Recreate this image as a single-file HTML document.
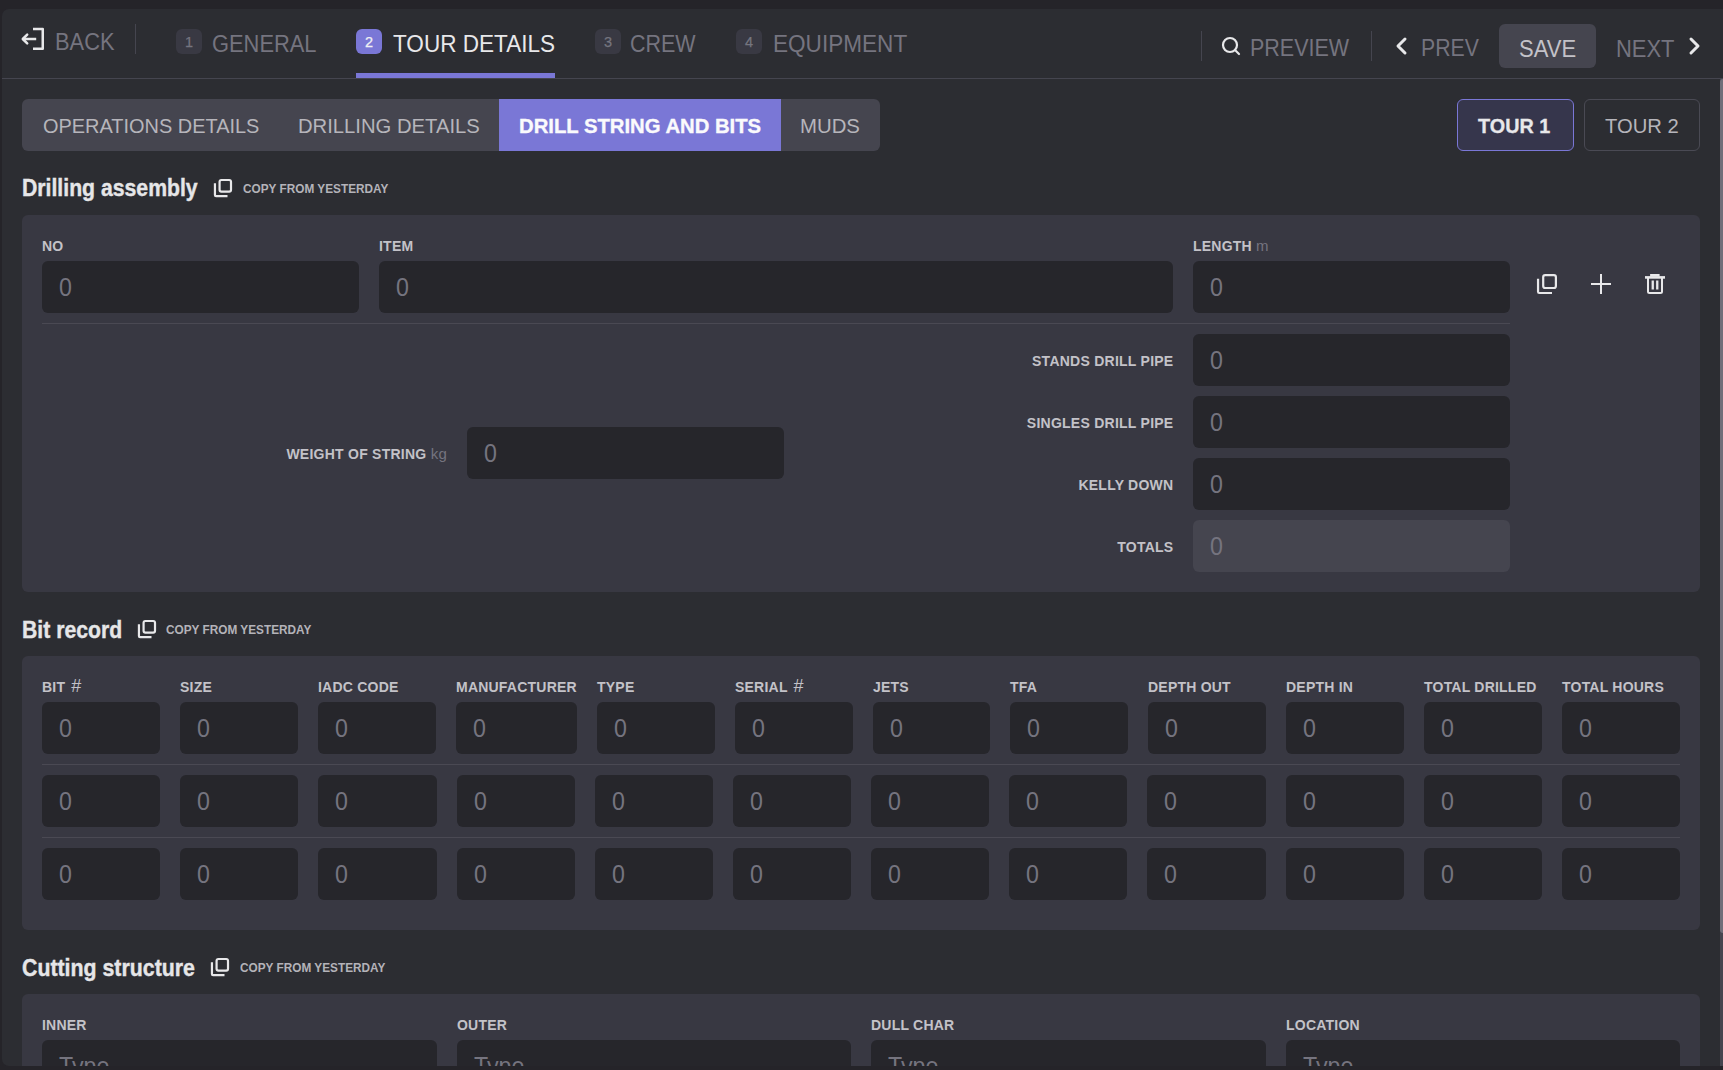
<!DOCTYPE html>
<html><head><meta charset="utf-8">
<style>
*{box-sizing:border-box;margin:0;padding:0}
html,body{width:1723px;height:1070px;overflow:hidden;background:#252429;font-family:"Liberation Sans",sans-serif}
.a{position:absolute}
.t{position:absolute;white-space:nowrap;line-height:1}
.badge{position:absolute;width:26px;height:25px;border-radius:6px;background:#393943;color:#75757f;font-size:14.5px;line-height:27px;text-align:center;-webkit-text-stroke:0.25px currentColor}
.sep{position:absolute;width:1px;background:#45454f}
</style></head><body>
<div class="a" style="left:2px;top:9px;width:1740px;height:1057px;background:#2c2d32;border-radius:7px"></div>
<div class="a" style="left:2px;top:78px;width:1721px;height:1px;background:#45454f;border-radius:0px;"></div>
<svg class="a" style="left:0;top:0;overflow:visible" width="60" height="60" fill="none" stroke="#e8e8ea" stroke-width="2.5" stroke-linejoin="round">
<path d="M33 29.05 H42.75 V48.75 H33"/><path d="M22.8 39 H36.2"/><path d="M27.2 34.6 L22.8 39 L27.2 43.4" stroke-linecap="round"/></svg>
<div class="t" id="back" style="left:54.80px;top:30.72px;font-size:23.00px;transform:scaleX(0.9502);transform-origin:0 0;color:#75747f;font-weight:normal;">BACK</div>
<div class="sep" style="left:135px;top:24px;height:30px"></div>
<div class="badge" style="left:176px;top:29px">1</div>
<div class="t" id="general" style="left:211.80px;top:33.22px;font-size:23.00px;transform:scaleX(0.9507);transform-origin:0 0;color:#75747f;font-weight:normal;">GENERAL</div>
<div class="badge" style="left:356px;top:29px;background:#7a77d6;color:#f0f0f4">2</div>
<div class="t" id="tourdetails" style="left:392.60px;top:32.62px;font-size:23.00px;transform:scaleX(0.9808);transform-origin:0 0;color:#e8e8ea;font-weight:normal;">TOUR DETAILS</div>
<div class="a" style="left:356px;top:73px;width:199px;height:5px;background:#7a77d6;border-radius:0px;"></div>
<div class="badge" style="left:595px;top:29px">3</div>
<div class="t" id="crew" style="left:630.20px;top:32.62px;font-size:23.00px;transform:scaleX(0.9337);transform-origin:0 0;color:#75747f;font-weight:normal;">CREW</div>
<div class="badge" style="left:736px;top:29px">4</div>
<div class="t" id="equipment" style="left:772.60px;top:32.62px;font-size:23.00px;transform:scaleX(0.9814);transform-origin:0 0;color:#75747f;font-weight:normal;">EQUIPMENT</div>
<div class="sep" style="left:1201px;top:31px;height:30px"></div>
<svg class="a" style="left:1220px;top:36px" width="22" height="20" viewBox="0 0 22 20" fill="none" stroke="#e8e8ea" stroke-width="2.2" stroke-linecap="round">
<circle cx="10" cy="9" r="7"/><path d="M15 14 L19 18"/></svg>
<div class="t" id="preview" style="left:1250.40px;top:37.22px;font-size:23.00px;transform:scaleX(0.9342);transform-origin:0 0;color:#75747f;font-weight:normal;">PREVIEW</div>
<div class="sep" style="left:1371px;top:31px;height:30px"></div>
<svg class="a" style="left:1392px;top:36px" width="18" height="20" viewBox="0 0 18 20" fill="none" stroke="#e8e8ea" stroke-width="3" stroke-linecap="round" stroke-linejoin="round">
<path d="M13 3 L6 10 L13 17"/></svg>
<div class="t" id="prev" style="left:1420.60px;top:37.22px;font-size:23.00px;transform:scaleX(0.9243);transform-origin:0 0;color:#75747f;font-weight:normal;">PREV</div>
<div class="a" style="left:1499px;top:24px;width:97px;height:44px;background:#45454f;border-radius:6px;"></div>
<div class="t" id="save" style="left:1518.80px;top:38.02px;font-size:23.00px;transform:scaleX(0.9563);transform-origin:0 0;color:#c3c2c8;font-weight:normal;">SAVE</div>
<div class="t" id="next" style="left:1616.40px;top:38.02px;font-size:23.00px;transform:scaleX(0.9536);transform-origin:0 0;color:#75747f;font-weight:normal;">NEXT</div>
<svg class="a" style="left:1686px;top:36px" width="18" height="20" viewBox="0 0 18 20" fill="none" stroke="#e8e8ea" stroke-width="3" stroke-linecap="round" stroke-linejoin="round">
<path d="M5 3 L12 10 L5 17"/></svg>
<div class="a" style="left:22px;top:99px;width:858px;height:52px;background:#45454f;border-radius:6px;overflow:hidden"><div class="a" style="left:477px;top:0;width:282px;height:52px;background:#7a77d6"></div></div>
<div class="t" id="ops" style="left:42.80px;top:115.57px;font-size:20.00px;transform:scaleX(0.9969);transform-origin:0 0;color:#b6b5bb;font-weight:normal;">OPERATIONS DETAILS</div>
<div class="t" id="drilling" style="left:297.80px;top:115.57px;font-size:20.00px;transform:scaleX(1.0120);transform-origin:0 0;color:#b6b5bb;font-weight:normal;">DRILLING DETAILS</div>
<div class="t" id="dsb" style="left:518.80px;top:115.57px;font-size:20.00px;transform:scaleX(1.0134);transform-origin:0 0;color:#fafafc;font-weight:bold;-webkit-text-stroke:0.35px #fafafc">DRILL STRING AND BITS</div>
<div class="t" id="muds" style="left:800.20px;top:115.57px;font-size:20.00px;transform:scaleX(1.0179);transform-origin:0 0;color:#b6b5bb;font-weight:normal;">MUDS</div>
<div class="a" style="left:1457px;top:99px;width:117px;height:52px;background:#36364c;border:1px solid #7a77d6;border-radius:6px"></div>
<div class="t" id="tour1" style="left:1478.40px;top:115.57px;font-size:20.00px;transform:scaleX(0.9896);transform-origin:0 0;color:#e8e8ea;font-weight:bold;-webkit-text-stroke:0.3px #e8e8ea">TOUR 1</div>
<div class="a" style="left:1584px;top:99px;width:116px;height:52px;border:1px solid #4a4a54;border-radius:6px"></div>
<div class="t" id="tour2" style="left:1605.00px;top:115.57px;font-size:20.00px;transform:scaleX(1.0110);transform-origin:0 0;color:#b6b5bb;font-weight:normal;">TOUR 2</div>
<div class="t" id="h_drilling" style="left:21.60px;top:176.44px;font-size:24.70px;transform:scaleX(0.8591);transform-origin:0 0;color:#e6e6e8;font-weight:bold;-webkit-text-stroke:0.4px #e6e6e8">Drilling assembly</div>
<svg class="a" style="left:214px;top:179px;overflow:visible" width="18" height="18" viewBox="0 0 20 20" fill="none" stroke="#e8e8ea" stroke-width="2.44">
<path d="M1.05 4.7 V17.8 a1.2 1.2 0 0 0 1.2 1.2 H15"/><rect x="6.2" y="1.1" width="12.7" height="12.9" rx="2"/></svg>
<div class="t" style="left:243px;top:182.63px;font-size:12.6px;color:#b4b3b9;font-weight:bold;transform:scaleX(0.937);transform-origin:0 0">COPY FROM YESTERDAY</div>
<div class="a" style="left:22px;top:215px;width:1678px;height:377px;background:#383842;border-radius:6px;"></div>
<div class="t" style="left:42px;top:238.65px;font-size:14px;font-weight:bold;color:#c3c2c8;letter-spacing:0.22px">NO</div>
<div class="t" style="left:379px;top:238.65px;font-size:14px;font-weight:bold;color:#c3c2c8;letter-spacing:0.22px">ITEM</div>
<div class="t" style="left:1193px;top:238.65px;font-size:14px;font-weight:bold;color:#c3c2c8;letter-spacing:0.22px">LENGTH <span style="font-weight:normal;color:#75747f;font-size:15px;line-height:0">m</span></div>
<div class="a" style="left:42px;top:261px;width:317px;height:52px;background:#26262b;border-radius:6px;"></div>
<div class="t" style="left:59.3px;top:274.50px;font-size:25.4px;color:#75747f;font-weight:normal;transform:scaleX(0.914);transform-origin:0 0">0</div>
<div class="a" style="left:379px;top:261px;width:794px;height:52px;background:#26262b;border-radius:6px;"></div>
<div class="t" style="left:396.3px;top:274.50px;font-size:25.4px;color:#75747f;font-weight:normal;transform:scaleX(0.914);transform-origin:0 0">0</div>
<div class="a" style="left:1193px;top:261px;width:317px;height:52px;background:#26262b;border-radius:6px;"></div>
<div class="t" style="left:1210.3px;top:274.50px;font-size:25.4px;color:#75747f;font-weight:normal;transform:scaleX(0.914);transform-origin:0 0">0</div>
<svg class="a" style="left:1537px;top:274px;overflow:visible" width="20" height="20" viewBox="0 0 20 20" fill="none" stroke="#e8e8ea" stroke-width="2.20">
<path d="M1.05 4.7 V17.8 a1.2 1.2 0 0 0 1.2 1.2 H15"/><rect x="6.2" y="1.1" width="12.7" height="12.9" rx="2"/></svg>
<svg class="a" style="left:1591px;top:274px" width="20" height="20" viewBox="0 0 20 20" fill="none" stroke="#e8e8ea" stroke-width="2"><path d="M10 0 V20 M0 10 H20"/></svg>
<svg class="a" style="left:1645px;top:274px;overflow:visible" width="20" height="20" viewBox="0 0 20 20" fill="none" stroke="#e8e8ea" stroke-width="2">
<rect x="5.1" y="0" width="9.5" height="2.6" fill="#e8e8ea" stroke="none"/><rect x="0" y="2.1" width="20" height="2.6" fill="#e8e8ea" stroke="none"/><path d="M3 4 V17.6 a1.5 1.5 0 0 0 1.5 1.5 H15.5 a1.5 1.5 0 0 0 1.5 -1.5 V4"/><path d="M7.75 6.4 V15.6 M12.25 6.4 V15.6" stroke-width="2.3"/></svg>
<div class="a" style="left:42px;top:323px;width:1468px;height:1px;background:#4a4953;border-radius:0px;"></div>
<div class="t" style="right:549.8px;top:353.75px;font-size:14px;color:#c3c2c8;font-weight:bold;text-align:right;letter-spacing:0.25px;margin-right:-0.25px">STANDS DRILL PIPE</div>
<div class="t" style="right:549.8px;top:415.75px;font-size:14px;color:#c3c2c8;font-weight:bold;text-align:right;letter-spacing:0.25px;margin-right:-0.25px">SINGLES DRILL PIPE</div>
<div class="t" style="right:549.8px;top:477.75px;font-size:14px;color:#c3c2c8;font-weight:bold;text-align:right;letter-spacing:0.25px;margin-right:-0.25px">KELLY DOWN</div>
<div class="t" style="right:549.8px;top:539.75px;font-size:14px;color:#c3c2c8;font-weight:bold;text-align:right;letter-spacing:0.25px;margin-right:-0.25px">TOTALS</div>
<div class="a" style="left:1193px;top:334px;width:317px;height:52px;background:#26262b;border-radius:6px;"></div>
<div class="t" style="left:1210.3px;top:347.50px;font-size:25.4px;color:#75747f;font-weight:normal;transform:scaleX(0.914);transform-origin:0 0">0</div>
<div class="a" style="left:1193px;top:396px;width:317px;height:52px;background:#26262b;border-radius:6px;"></div>
<div class="t" style="left:1210.3px;top:409.50px;font-size:25.4px;color:#75747f;font-weight:normal;transform:scaleX(0.914);transform-origin:0 0">0</div>
<div class="a" style="left:1193px;top:458px;width:317px;height:52px;background:#26262b;border-radius:6px;"></div>
<div class="t" style="left:1210.3px;top:471.50px;font-size:25.4px;color:#75747f;font-weight:normal;transform:scaleX(0.914);transform-origin:0 0">0</div>
<div class="a" style="left:1193px;top:520px;width:317px;height:52px;background:#45454f;border-radius:6px;"></div>
<div class="t" style="left:1210.3px;top:533.50px;font-size:25.4px;color:#75747f;font-weight:normal;transform:scaleX(0.914);transform-origin:0 0">0</div>
<div class="t" style="right:1276px;top:447.15px;font-size:14px;font-weight:bold;color:#c3c2c8;letter-spacing:0.25px">WEIGHT OF STRING <span style="font-weight:normal;color:#75747f;font-size:15px;line-height:0">kg</span></div>
<div class="a" style="left:467px;top:427px;width:317px;height:52px;background:#26262b;border-radius:6px;"></div>
<div class="t" style="left:484.3px;top:440.50px;font-size:25.4px;color:#75747f;font-weight:normal;transform:scaleX(0.914);transform-origin:0 0">0</div>
<div class="t" id="h_bit" style="left:22.00px;top:618.16px;font-size:24.70px;transform:scaleX(0.8587);transform-origin:0 0;color:#e6e6e8;font-weight:bold;-webkit-text-stroke:0.4px #e6e6e8">Bit record</div>
<svg class="a" style="left:138px;top:620px;overflow:visible" width="18" height="18" viewBox="0 0 20 20" fill="none" stroke="#e8e8ea" stroke-width="2.44">
<path d="M1.05 4.7 V17.8 a1.2 1.2 0 0 0 1.2 1.2 H15"/><rect x="6.2" y="1.1" width="12.7" height="12.9" rx="2"/></svg>
<div class="t" style="left:166px;top:624.23px;font-size:12.6px;color:#b4b3b9;font-weight:bold;transform:scaleX(0.937);transform-origin:0 0">COPY FROM YESTERDAY</div>
<div class="a" style="left:22px;top:656px;width:1678px;height:274px;background:#383842;border-radius:6px;"></div>
<div class="t" style="left:42px;top:680.45px;font-size:14px;font-weight:bold;color:#c3c2c8;letter-spacing:0.22px">BIT <span style="font-weight:normal;font-size:18px;margin-left:2px;line-height:0">#</span></div>
<div class="a" style="left:42px;top:702px;width:118px;height:52px;background:#26262b;border-radius:6px;"></div>
<div class="t" style="left:59.3px;top:715.50px;font-size:25.4px;color:#75747f;font-weight:normal;transform:scaleX(0.914);transform-origin:0 0">0</div>
<div class="t" style="left:180px;top:680.45px;font-size:14px;font-weight:bold;color:#c3c2c8;letter-spacing:0.22px">SIZE</div>
<div class="a" style="left:180px;top:702px;width:118px;height:52px;background:#26262b;border-radius:6px;"></div>
<div class="t" style="left:197.3px;top:715.50px;font-size:25.4px;color:#75747f;font-weight:normal;transform:scaleX(0.914);transform-origin:0 0">0</div>
<div class="t" style="left:318px;top:680.45px;font-size:14px;font-weight:bold;color:#c3c2c8;letter-spacing:0.22px">IADC CODE</div>
<div class="a" style="left:318px;top:702px;width:118px;height:52px;background:#26262b;border-radius:6px;"></div>
<div class="t" style="left:335.3px;top:715.50px;font-size:25.4px;color:#75747f;font-weight:normal;transform:scaleX(0.914);transform-origin:0 0">0</div>
<div class="t" style="left:456px;top:680.45px;font-size:14px;font-weight:bold;color:#c3c2c8;letter-spacing:0.22px">MANUFACTURER</div>
<div class="a" style="left:456px;top:702px;width:121px;height:52px;background:#26262b;border-radius:6px;"></div>
<div class="t" style="left:473.3px;top:715.50px;font-size:25.4px;color:#75747f;font-weight:normal;transform:scaleX(0.914);transform-origin:0 0">0</div>
<div class="t" style="left:597px;top:680.45px;font-size:14px;font-weight:bold;color:#c3c2c8;letter-spacing:0.22px">TYPE</div>
<div class="a" style="left:597px;top:702px;width:118px;height:52px;background:#26262b;border-radius:6px;"></div>
<div class="t" style="left:614.3px;top:715.50px;font-size:25.4px;color:#75747f;font-weight:normal;transform:scaleX(0.914);transform-origin:0 0">0</div>
<div class="t" style="left:735px;top:680.45px;font-size:14px;font-weight:bold;color:#c3c2c8;letter-spacing:0.22px">SERIAL <span style="font-weight:normal;font-size:18px;margin-left:2px;line-height:0">#</span></div>
<div class="a" style="left:735px;top:702px;width:118px;height:52px;background:#26262b;border-radius:6px;"></div>
<div class="t" style="left:752.3px;top:715.50px;font-size:25.4px;color:#75747f;font-weight:normal;transform:scaleX(0.914);transform-origin:0 0">0</div>
<div class="t" style="left:873px;top:680.45px;font-size:14px;font-weight:bold;color:#c3c2c8;letter-spacing:0.22px">JETS</div>
<div class="a" style="left:873px;top:702px;width:117px;height:52px;background:#26262b;border-radius:6px;"></div>
<div class="t" style="left:890.3px;top:715.50px;font-size:25.4px;color:#75747f;font-weight:normal;transform:scaleX(0.914);transform-origin:0 0">0</div>
<div class="t" style="left:1010px;top:680.45px;font-size:14px;font-weight:bold;color:#c3c2c8;letter-spacing:0.22px">TFA</div>
<div class="a" style="left:1010px;top:702px;width:118px;height:52px;background:#26262b;border-radius:6px;"></div>
<div class="t" style="left:1027.3px;top:715.50px;font-size:25.4px;color:#75747f;font-weight:normal;transform:scaleX(0.914);transform-origin:0 0">0</div>
<div class="t" style="left:1148px;top:680.45px;font-size:14px;font-weight:bold;color:#c3c2c8;letter-spacing:0.22px">DEPTH OUT</div>
<div class="a" style="left:1148px;top:702px;width:118px;height:52px;background:#26262b;border-radius:6px;"></div>
<div class="t" style="left:1165.3px;top:715.50px;font-size:25.4px;color:#75747f;font-weight:normal;transform:scaleX(0.914);transform-origin:0 0">0</div>
<div class="t" style="left:1286px;top:680.45px;font-size:14px;font-weight:bold;color:#c3c2c8;letter-spacing:0.22px">DEPTH IN</div>
<div class="a" style="left:1286px;top:702px;width:118px;height:52px;background:#26262b;border-radius:6px;"></div>
<div class="t" style="left:1303.3px;top:715.50px;font-size:25.4px;color:#75747f;font-weight:normal;transform:scaleX(0.914);transform-origin:0 0">0</div>
<div class="t" style="left:1424px;top:680.45px;font-size:14px;font-weight:bold;color:#c3c2c8;letter-spacing:0.22px">TOTAL DRILLED</div>
<div class="a" style="left:1424px;top:702px;width:118px;height:52px;background:#26262b;border-radius:6px;"></div>
<div class="t" style="left:1441.3px;top:715.50px;font-size:25.4px;color:#75747f;font-weight:normal;transform:scaleX(0.914);transform-origin:0 0">0</div>
<div class="t" style="left:1562px;top:680.45px;font-size:14px;font-weight:bold;color:#c3c2c8;letter-spacing:0.22px">TOTAL HOURS</div>
<div class="a" style="left:1562px;top:702px;width:118px;height:52px;background:#26262b;border-radius:6px;"></div>
<div class="t" style="left:1579.3px;top:715.50px;font-size:25.4px;color:#75747f;font-weight:normal;transform:scaleX(0.914);transform-origin:0 0">0</div>
<div class="a" style="left:42px;top:764px;width:1638px;height:1px;background:#4a4953;border-radius:0px;"></div>
<div class="a" style="left:42px;top:775px;width:118px;height:52px;background:#26262b;border-radius:6px;"></div>
<div class="t" style="left:59.3px;top:788.50px;font-size:25.4px;color:#75747f;font-weight:normal;transform:scaleX(0.914);transform-origin:0 0">0</div>
<div class="a" style="left:180px;top:775px;width:118px;height:52px;background:#26262b;border-radius:6px;"></div>
<div class="t" style="left:197.3px;top:788.50px;font-size:25.4px;color:#75747f;font-weight:normal;transform:scaleX(0.914);transform-origin:0 0">0</div>
<div class="a" style="left:318px;top:775px;width:119px;height:52px;background:#26262b;border-radius:6px;"></div>
<div class="t" style="left:335.3px;top:788.50px;font-size:25.4px;color:#75747f;font-weight:normal;transform:scaleX(0.914);transform-origin:0 0">0</div>
<div class="a" style="left:457px;top:775px;width:118px;height:52px;background:#26262b;border-radius:6px;"></div>
<div class="t" style="left:474.3px;top:788.50px;font-size:25.4px;color:#75747f;font-weight:normal;transform:scaleX(0.914);transform-origin:0 0">0</div>
<div class="a" style="left:595px;top:775px;width:118px;height:52px;background:#26262b;border-radius:6px;"></div>
<div class="t" style="left:612.3px;top:788.50px;font-size:25.4px;color:#75747f;font-weight:normal;transform:scaleX(0.914);transform-origin:0 0">0</div>
<div class="a" style="left:733px;top:775px;width:118px;height:52px;background:#26262b;border-radius:6px;"></div>
<div class="t" style="left:750.3px;top:788.50px;font-size:25.4px;color:#75747f;font-weight:normal;transform:scaleX(0.914);transform-origin:0 0">0</div>
<div class="a" style="left:871px;top:775px;width:118px;height:52px;background:#26262b;border-radius:6px;"></div>
<div class="t" style="left:888.3px;top:788.50px;font-size:25.4px;color:#75747f;font-weight:normal;transform:scaleX(0.914);transform-origin:0 0">0</div>
<div class="a" style="left:1009px;top:775px;width:118px;height:52px;background:#26262b;border-radius:6px;"></div>
<div class="t" style="left:1026.3px;top:788.50px;font-size:25.4px;color:#75747f;font-weight:normal;transform:scaleX(0.914);transform-origin:0 0">0</div>
<div class="a" style="left:1147px;top:775px;width:119px;height:52px;background:#26262b;border-radius:6px;"></div>
<div class="t" style="left:1164.3px;top:788.50px;font-size:25.4px;color:#75747f;font-weight:normal;transform:scaleX(0.914);transform-origin:0 0">0</div>
<div class="a" style="left:1286px;top:775px;width:118px;height:52px;background:#26262b;border-radius:6px;"></div>
<div class="t" style="left:1303.3px;top:788.50px;font-size:25.4px;color:#75747f;font-weight:normal;transform:scaleX(0.914);transform-origin:0 0">0</div>
<div class="a" style="left:1424px;top:775px;width:118px;height:52px;background:#26262b;border-radius:6px;"></div>
<div class="t" style="left:1441.3px;top:788.50px;font-size:25.4px;color:#75747f;font-weight:normal;transform:scaleX(0.914);transform-origin:0 0">0</div>
<div class="a" style="left:1562px;top:775px;width:118px;height:52px;background:#26262b;border-radius:6px;"></div>
<div class="t" style="left:1579.3px;top:788.50px;font-size:25.4px;color:#75747f;font-weight:normal;transform:scaleX(0.914);transform-origin:0 0">0</div>
<div class="a" style="left:42px;top:837px;width:1638px;height:1px;background:#4a4953;border-radius:0px;"></div>
<div class="a" style="left:42px;top:848px;width:118px;height:52px;background:#26262b;border-radius:6px;"></div>
<div class="t" style="left:59.3px;top:861.50px;font-size:25.4px;color:#75747f;font-weight:normal;transform:scaleX(0.914);transform-origin:0 0">0</div>
<div class="a" style="left:180px;top:848px;width:118px;height:52px;background:#26262b;border-radius:6px;"></div>
<div class="t" style="left:197.3px;top:861.50px;font-size:25.4px;color:#75747f;font-weight:normal;transform:scaleX(0.914);transform-origin:0 0">0</div>
<div class="a" style="left:318px;top:848px;width:119px;height:52px;background:#26262b;border-radius:6px;"></div>
<div class="t" style="left:335.3px;top:861.50px;font-size:25.4px;color:#75747f;font-weight:normal;transform:scaleX(0.914);transform-origin:0 0">0</div>
<div class="a" style="left:457px;top:848px;width:118px;height:52px;background:#26262b;border-radius:6px;"></div>
<div class="t" style="left:474.3px;top:861.50px;font-size:25.4px;color:#75747f;font-weight:normal;transform:scaleX(0.914);transform-origin:0 0">0</div>
<div class="a" style="left:595px;top:848px;width:118px;height:52px;background:#26262b;border-radius:6px;"></div>
<div class="t" style="left:612.3px;top:861.50px;font-size:25.4px;color:#75747f;font-weight:normal;transform:scaleX(0.914);transform-origin:0 0">0</div>
<div class="a" style="left:733px;top:848px;width:118px;height:52px;background:#26262b;border-radius:6px;"></div>
<div class="t" style="left:750.3px;top:861.50px;font-size:25.4px;color:#75747f;font-weight:normal;transform:scaleX(0.914);transform-origin:0 0">0</div>
<div class="a" style="left:871px;top:848px;width:118px;height:52px;background:#26262b;border-radius:6px;"></div>
<div class="t" style="left:888.3px;top:861.50px;font-size:25.4px;color:#75747f;font-weight:normal;transform:scaleX(0.914);transform-origin:0 0">0</div>
<div class="a" style="left:1009px;top:848px;width:118px;height:52px;background:#26262b;border-radius:6px;"></div>
<div class="t" style="left:1026.3px;top:861.50px;font-size:25.4px;color:#75747f;font-weight:normal;transform:scaleX(0.914);transform-origin:0 0">0</div>
<div class="a" style="left:1147px;top:848px;width:119px;height:52px;background:#26262b;border-radius:6px;"></div>
<div class="t" style="left:1164.3px;top:861.50px;font-size:25.4px;color:#75747f;font-weight:normal;transform:scaleX(0.914);transform-origin:0 0">0</div>
<div class="a" style="left:1286px;top:848px;width:118px;height:52px;background:#26262b;border-radius:6px;"></div>
<div class="t" style="left:1303.3px;top:861.50px;font-size:25.4px;color:#75747f;font-weight:normal;transform:scaleX(0.914);transform-origin:0 0">0</div>
<div class="a" style="left:1424px;top:848px;width:118px;height:52px;background:#26262b;border-radius:6px;"></div>
<div class="t" style="left:1441.3px;top:861.50px;font-size:25.4px;color:#75747f;font-weight:normal;transform:scaleX(0.914);transform-origin:0 0">0</div>
<div class="a" style="left:1562px;top:848px;width:118px;height:52px;background:#26262b;border-radius:6px;"></div>
<div class="t" style="left:1579.3px;top:861.50px;font-size:25.4px;color:#75747f;font-weight:normal;transform:scaleX(0.914);transform-origin:0 0">0</div>
<div class="t" id="h_cutting" style="left:22.20px;top:955.75px;font-size:24.70px;transform:scaleX(0.8636);transform-origin:0 0;color:#e6e6e8;font-weight:bold;-webkit-text-stroke:0.4px #e6e6e8">Cutting structure</div>
<svg class="a" style="left:211px;top:958px;overflow:visible" width="18" height="18" viewBox="0 0 20 20" fill="none" stroke="#e8e8ea" stroke-width="2.44">
<path d="M1.05 4.7 V17.8 a1.2 1.2 0 0 0 1.2 1.2 H15"/><rect x="6.2" y="1.1" width="12.7" height="12.9" rx="2"/></svg>
<div class="t" style="left:239.5px;top:961.93px;font-size:12.6px;color:#b4b3b9;font-weight:bold;transform:scaleX(0.937);transform-origin:0 0">COPY FROM YESTERDAY</div>
<div class="a" style="left:22px;top:994px;width:1678px;height:106px;background:#383842;border-radius:6px;"></div>
<div class="t" style="left:42px;top:1018.25px;font-size:14px;font-weight:bold;color:#c3c2c8;letter-spacing:0.22px">INNER</div>
<div class="a" style="left:42px;top:1040px;width:395px;height:60px;background:#26262b;border-radius:6px;"></div>
<div class="t" style="left:59.3px;top:1053.50px;font-size:25.4px;color:#75747f;font-weight:normal;transform:scaleX(0.914);transform-origin:0 0">Type</div>
<div class="t" style="left:457px;top:1018.25px;font-size:14px;font-weight:bold;color:#c3c2c8;letter-spacing:0.22px">OUTER</div>
<div class="a" style="left:457px;top:1040px;width:394px;height:60px;background:#26262b;border-radius:6px;"></div>
<div class="t" style="left:474.3px;top:1053.50px;font-size:25.4px;color:#75747f;font-weight:normal;transform:scaleX(0.914);transform-origin:0 0">Type</div>
<div class="t" style="left:871px;top:1018.25px;font-size:14px;font-weight:bold;color:#c3c2c8;letter-spacing:0.22px">DULL CHAR</div>
<div class="a" style="left:871px;top:1040px;width:395px;height:60px;background:#26262b;border-radius:6px;"></div>
<div class="t" style="left:888.3px;top:1053.50px;font-size:25.4px;color:#75747f;font-weight:normal;transform:scaleX(0.914);transform-origin:0 0">Type</div>
<div class="t" style="left:1286px;top:1018.25px;font-size:14px;font-weight:bold;color:#c3c2c8;letter-spacing:0.22px">LOCATION</div>
<div class="a" style="left:1286px;top:1040px;width:394px;height:60px;background:#26262b;border-radius:6px;"></div>
<div class="t" style="left:1303.3px;top:1053.50px;font-size:25.4px;color:#75747f;font-weight:normal;transform:scaleX(0.914);transform-origin:0 0">Type</div>
<div class="a" style="left:1720px;top:79px;width:3px;height:987px;background:#45454f;border-radius:0px;"></div>
<div class="a" style="left:1720px;top:79px;width:6px;height:854px;background:#6f6e79;border-radius:3px;"></div>
<div class="a" style="left:0px;top:1066px;width:1723px;height:4px;background:#252429;border-radius:0px;"></div>
</body></html>
